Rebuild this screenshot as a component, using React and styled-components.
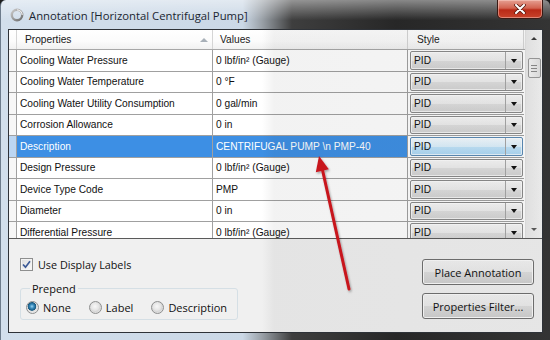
import React from 'react';
import styled, { createGlobalStyle } from 'styled-components';

const GlobalStyle = createGlobalStyle`
  html, body { margin: 0; padding: 0; background: #1e1e1e; }
  body { width: 550px; height: 340px; overflow: hidden; }
  * { box-sizing: border-box; }
`;

const grid = "'Liberation Sans', Arial, sans-serif";
const ui = "'Open Sans', 'Noto Sans', sans-serif";

const Window = styled.div`
  position: relative;
  width: 550px;
  height: 340px;
  display: flex;
  flex-direction: column;
  border-radius: 6px 6px 0 0;
  border-left: 1px solid #6d7c8c;
  background: linear-gradient(to right, #d2dfec 0%, #cbd8e6 44%, #9aa1a8 47.5%, #3e3e3e 53%, #272727 72%, #343434 100%);
  overflow: hidden;
`;

const TitleBar = styled.div`
  height: 29px;
  flex: none;
  display: flex;
  align-items: center;
  padding-left: 9px;
  gap: 5px;
  background: linear-gradient(to bottom, rgba(255,255,255,0.45), rgba(255,255,255,0) 70%);
`;

const TitleText = styled.div`
  font-family: ${ui};
  font-size: 11.3px;
  color: #1b2631;
  white-space: nowrap;
  margin-top: 1px;
`;

const CloseButton = styled.div`
  margin-left: auto;
  margin-right: 7px;
  align-self: flex-start;
  width: 46px;
  height: 19px;
  border: 1px solid #3a1a14;
  border-top: none;
  border-radius: 0 0 5px 5px;
  background: linear-gradient(to bottom, #e6a092 0%, #d2624f 45%, #b92a17 55%, #c8432b 100%);
  box-shadow: inset 0 0 0 1px rgba(255,220,210,0.45);
  display: flex;
  align-items: center;
  justify-content: center;
`;

const Client = styled.div`
  position: relative;
  flex: 1;
  margin: 0 7px 7px 7px;
  border: 1px solid #2e3238;
  background: #f0f0f0;
  display: flex;
  flex-direction: column;
`;

const GridBox = styled.div`
  height: 209px;
  flex: none;
  display: flex;
  border-bottom: 1px solid #5a5a5a;
  background: #ffffff;
  overflow: hidden;
`;

const GridMain = styled.div`
  flex: 1;
  display: flex;
  flex-direction: column;
  overflow: hidden;
`;

const cols = '8px 196px 195px 116px';

const HeaderRow = styled.div`
  display: grid;
  grid-template-columns: ${cols};
  height: 20px;
  flex: none;
  border-bottom: 1px solid #a7a7a7;
  background: linear-gradient(to bottom, #ffffff 0%, #fbfbfb 60%, #f1f1f1 100%);
`;

const HeaderCell = styled.div`
  display: flex;
  align-items: center;
  justify-content: space-between;
  padding-left: ${p => p.$pad || 0}px;
  padding-right: 3px;
  border-right: 1px solid #d5d5d5;
  font-family: ${grid};
  font-size: 10.2px;
  color: #1a1a1a;
  white-space: nowrap;
`;

const SortGlyph = styled.span`
  width: 0;
  height: 0;
  margin-right: 1px;
  border-left: 4px solid transparent;
  border-right: 4px solid transparent;
  border-bottom: 4px solid #a8b0b8;
`;

const Row = styled.div`
  display: grid;
  grid-template-columns: ${cols};
  height: 21.5px;
  flex: none;
`;

const RowHead = styled.div`
  border-right: 1px solid #a0a0a0;
  border-bottom: 1px solid #a0a0a0;
  background: ${p => (p.$sel ? '#bcd6f2' : '#f7f7f7')};
`;

const Cell = styled.div`
  display: flex;
  align-items: center;
  padding-left: 3px;
  border-right: 1px solid #a0a0a0;
  border-bottom: 1px solid #a0a0a0;
  background: ${p => (p.$sel ? '#3d8fe4' : '#ffffff')};
  color: ${p => (p.$sel ? '#ffffff' : '#111111')};
  font-family: ${grid};
  font-size: 10.2px;
  white-space: nowrap;
  overflow: hidden;
`;

const StyleCell = styled.div`
  padding: 1px 1px 1px 2px;
  border-bottom: 1px solid #a0a0a0;
  background: #ffffff;
`;

const Combo = styled.div`
  height: 100%;
  display: flex;
  border: 1px solid ${p => (p.$sel ? '#5a8ab5' : '#8a8a8a')};
  border-radius: 2px;
  background: ${p =>
    p.$sel
      ? 'linear-gradient(to bottom, #f3faff 0%, #dcf0fc 50%, #bfe3f9 52%, #add8f5 100%)'
      : 'linear-gradient(to bottom, #f6f6f6 0%, #ececec 50%, #dedede 52%, #d3d3d3 100%)'};
  box-shadow: inset 0 0 0 1px rgba(255,255,255,0.7);
`;

const ComboText = styled.div`
  flex: 1;
  display: flex;
  align-items: center;
  padding-left: 3px;
  font-family: ${grid};
  font-size: 10.2px;
  color: #111;
`;

const DropButton = styled.div`
  width: 17px;
  display: flex;
  align-items: center;
  justify-content: center;
  border-left: 1px solid #a6a6a6;
`;

const DownTriangle = styled.span`
  width: 0;
  height: 0;
  margin-top: 1px;
  border-left: 3.5px solid transparent;
  border-right: 3.5px solid transparent;
  border-top: 4px solid #111;
`;

const ScrollBar = styled.div`
  width: 17px;
  flex: none;
  display: flex;
  flex-direction: column;
  align-items: center;
  background: linear-gradient(to right, #e9e9e9, #f4f4f4);
  border-left: 1px solid #e2e2e2;
`;

const ScrollArrow = styled.div`
  height: 17px;
  width: 100%;
  display: flex;
  align-items: center;
  justify-content: center;
  &::after {
    content: '';
    width: 0;
    height: 0;
    border-left: 3px solid transparent;
    border-right: 3px solid transparent;
    ${p => (p.$down ? 'border-top: 3px solid #5a5a5a;' : 'border-bottom: 3px solid #3a3a3a;')}
  }
`;

const Thumb = styled.div`
  margin-top: 11px;
  width: 13px;
  height: 20px;
  border: 1px solid #9a9a9a;
  border-radius: 2px;
  background: linear-gradient(to right, #f4f4f4, #e2e2e2);
  display: flex;
  flex-direction: column;
  align-items: center;
  justify-content: center;
  gap: 2px;
`;

const Grip = styled.span`
  width: 6px;
  height: 1px;
  background: #8a8a8a;
`;

const Spacer = styled.div`
  flex: 1;
`;

const Bottom = styled.div`
  flex: 1;
  display: flex;
  justify-content: space-between;
  align-items: flex-start;
  padding: 18px 8px 0 11px;
`;

const Options = styled.div`
  display: flex;
  flex-direction: column;
`;

const CheckRow = styled.label`
  display: flex;
  align-items: center;
  gap: 5px;
  font-family: ${ui};
  font-size: 10.8px;
  color: #111;
`;

const CheckBox = styled.span`
  width: 13px;
  height: 13px;
  border: 1px solid #8e8f8f;
  background: linear-gradient(135deg, #dcdcdc, #fbfbfb);
  box-shadow: inset 0 0 0 1px #f4f4f4;
  display: flex;
  align-items: center;
  justify-content: center;
`;

const Group = styled.fieldset`
  margin: 9px 0 0 0;
  width: 218px;
  padding: 4px 4px 4px 5px;
  border: 1px solid #d5dfe5;
  border-radius: 3px;
  display: flex;
  gap: 18px;
`;

const Legend = styled.legend`
  padding: 0 2px;
  margin-left: 4px;
  font-family: ${ui};
  font-size: 11px;
  color: #111;
`;

const RadioItem = styled.label`
  display: flex;
  align-items: center;
  gap: 4px;
  font-family: ${ui};
  font-size: 11px;
  color: #111;
`;

const Radio = styled.span`
  width: 13px;
  height: 13px;
  border-radius: 50%;
  border: 1px solid #8e8f8f;
  background: ${p =>
    p.$on
      ? 'radial-gradient(circle at 45% 40%, #9fd6f2 0, #3a8cbd 2px, #17577e 4px, #e0e0e0 4.6px, #f6f6f6 100%)'
      : 'radial-gradient(circle at 45% 40%, #f8f8f8 0, #e4e4e4 4px, #d6d6d6 5px, #f2f2f2 100%)'};
`;

const Buttons = styled.div`
  display: flex;
  flex-direction: column;
  gap: 8px;
  margin-top: 2px;
`;

const Button = styled.button`
  width: 112px;
  height: 26px;
  padding: 0;
  border: 1px solid #707070;
  border-radius: 3px;
  background: linear-gradient(to bottom, #f2f2f2 0%, #ebebeb 50%, #dddddd 51%, #cfcfcf 100%);
  box-shadow: inset 0 0 0 1px #fbfbfb;
  font-family: ${ui};
  font-size: 11px;
  color: #111;
`;

const Shade = styled.div`
  position: absolute;
  left: 253px;
  top: 0;
  right: 0;
  bottom: 0;
  pointer-events: none;
  background: linear-gradient(to right, rgba(40,40,40,0) 0, rgba(40,40,40,0.06) 12px, rgba(40,40,40,0.05) 100%);
`;

const ArrowLayer = styled.svg`
  position: absolute;
  left: 0;
  top: 0;
  pointer-events: none;
`;

const rows = [
  ['Cooling Water Pressure', '0 lbf/in² (Gauge)'],
  ['Cooling Water Temperature', '0 °F'],
  ['Cooling Water Utility Consumption', '0 gal/min'],
  ['Corrosion Allowance', '0 in'],
  ['Description', 'CENTRIFUGAL PUMP \\n PMP-40', true],
  ['Design Pressure', '0 lbf/in² (Gauge)'],
  ['Device Type Code', 'PMP'],
  ['Diameter', '0 in'],
  ['Differential Pressure', '0 lbf/in² (Gauge)'],
];

export default function App() {
  return (
    <>
      <GlobalStyle />
      <Window>
        <TitleBar>
          <svg width="14" height="14" viewBox="0 0 14 14">
            <defs>
              <linearGradient id="ring" x1="0" y1="0" x2="1" y2="1">
                <stop offset="0" stopColor="#c9c9c9" />
                <stop offset="1" stopColor="#6d6d6d" />
              </linearGradient>
            </defs>
            <circle cx="7" cy="7" r="5.2" fill="none" stroke="url(#ring)" strokeWidth="2.4" />
            <path d="M7 1.8 A5.2 5.2 0 0 1 12.2 7" fill="none" stroke="#efefef" strokeWidth="1.2" />
          </svg>
          <TitleText>Annotation [Horizontal Centrifugal Pump]</TitleText>
          <CloseButton>
            <svg width="12" height="10" viewBox="0 0 12 10">
              <path d="M2 1 L10 9 M10 1 L2 9" stroke="#5a1a10" strokeWidth="3.6" strokeLinecap="round" />
              <path d="M2 1 L10 9 M10 1 L2 9" stroke="#ffffff" strokeWidth="2" strokeLinecap="round" />
            </svg>
          </CloseButton>
        </TitleBar>
        <Client>
          <GridBox>
            <GridMain>
              <HeaderRow>
                <HeaderCell />
                <HeaderCell $pad={8}>
                  Properties
                  <SortGlyph />
                </HeaderCell>
                <HeaderCell $pad={7}>Values</HeaderCell>
                <HeaderCell $pad={9}>Style</HeaderCell>
              </HeaderRow>
              {rows.map(([name, value, sel]) => (
                <Row key={name}>
                  <RowHead $sel={sel} />
                  <Cell $sel={sel}>{name}</Cell>
                  <Cell $sel={sel}>{value}</Cell>
                  <StyleCell>
                    <Combo $sel={sel}>
                      <ComboText>PID</ComboText>
                      <DropButton>
                        <DownTriangle />
                      </DropButton>
                    </Combo>
                  </StyleCell>
                </Row>
              ))}
            </GridMain>
            <ScrollBar>
              <ScrollArrow />
              <Thumb>
                <Grip />
                <Grip />
                <Grip />
              </Thumb>
              <Spacer />
              <ScrollArrow $down />
            </ScrollBar>
          </GridBox>
          <Bottom>
            <Options>
              <CheckRow>
                <CheckBox>
                  <svg width="9" height="9" viewBox="0 0 9 9">
                    <path d="M1 4.5 L3.5 7.2 L8 1.2" fill="none" stroke="#3c5a96" strokeWidth="1.7" />
                  </svg>
                </CheckBox>
                Use Display Labels
              </CheckRow>
              <Group>
                <Legend>Prepend</Legend>
                <RadioItem>
                  <Radio $on />
                  None
                </RadioItem>
                <RadioItem>
                  <Radio />
                  Label
                </RadioItem>
                <RadioItem>
                  <Radio />
                  Description
                </RadioItem>
              </Group>
            </Options>
            <Buttons>
              <Button>Place Annotation</Button>
              <Button>Properties Filter...</Button>
            </Buttons>
          </Bottom>
          <Shade />
        </Client>
        <ArrowLayer width="550" height="340" viewBox="0 0 550 340">
          <defs>
            <filter id="sh" x="-20%" y="-20%" width="140%" height="140%">
              <feDropShadow dx="1" dy="1.5" stdDeviation="1.2" floodColor="#000" floodOpacity="0.35" />
            </filter>
          </defs>
          <g filter="url(#sh)">
            <line x1="348" y1="289" x2="321.5" y2="170" stroke="#c8141e" strokeWidth="3" strokeLinecap="round" />
            <polygon points="318,156 327.8,169.3 314.8,172.2" fill="#c8141e" />
          </g>
        </ArrowLayer>
      </Window>
    </>
  );
}
